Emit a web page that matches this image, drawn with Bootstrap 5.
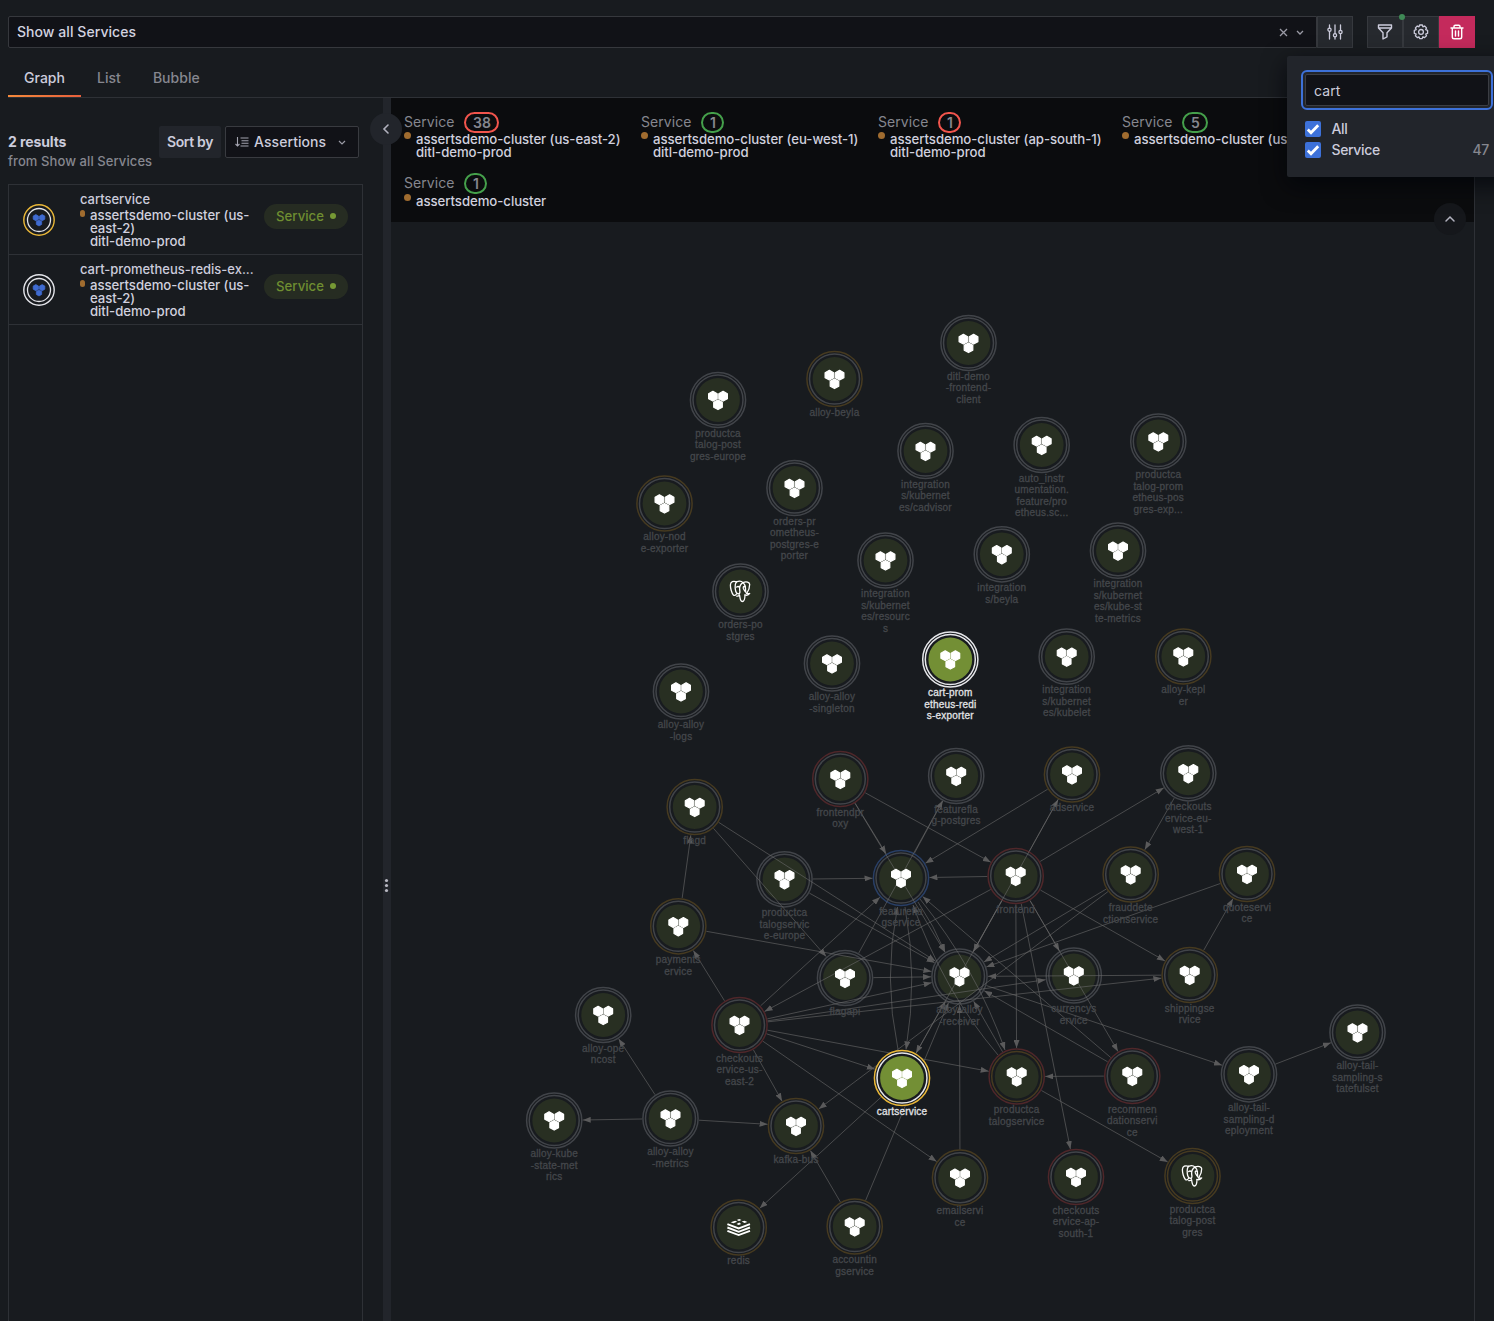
<!DOCTYPE html>
<html lang="en" data-bs-theme="dark">
<head>
<meta charset="utf-8">
<meta name="viewport" content="width=device-width, initial-scale=1">
<title>Entity explorer</title>
<link href="https://cdn.jsdelivr.net/npm/bootstrap@5.3.0/dist/css/bootstrap.min.css" rel="stylesheet">
<style>
:root{--line:#2e3136;--txt:#ccccdc;--muted:#86878f;--canvas:#111217;--page:#181b1f;--raised:#22252b}
body{background:var(--page);color:var(--txt);font:14px/22px Inter,"Liberation Sans",sans-serif;letter-spacing:.06px;height:100vh;overflow:hidden;-webkit-font-smoothing:antialiased}
svg{display:block}
.topbar{padding:16px 19px 0 8px}
.query{height:32px;background:var(--canvas);border:1px solid #36383d;border-radius:2px 0 0 2px;padding:0 12px 0 8px;color:#d3d3e0}
.tool{width:36px;height:32px;background:#26292e;border:1px solid #36393e;border-radius:0;color:var(--txt);padding:0;display:flex;align-items:center;justify-content:center}
.tool:last-child{border-radius:0 2px 2px 0}
.tool.trash{background:#c42a5c;border-color:#c42a5c;color:#fff}
.tool-group{margin-left:14px}
.status-dot{position:absolute;width:6px;height:6px;border-radius:50%;background:#3f8a56;left:32px;top:-2px}
.tabs{height:50px;border-bottom:1px solid var(--line);margin:0 19px 0 8px;padding-top:8px}
.tabs .nav-link{color:var(--muted);padding:11px 16px 0;height:41px;border-radius:0;position:relative;font-weight:500;letter-spacing:.03px}
.tabs .nav-link.active{color:var(--txt)}
.tabs .nav-link.active::after{content:"";position:absolute;left:0;right:0;bottom:0;height:2px;background:linear-gradient(90deg,#f58a3c,#e8603c)}
.work{height:1223px}
.side{width:383px;padding:28px 20px 0 8px}
.side-head{height:58px}
.found{line-height:19px;padding-top:7px;width:151px}
.found strong{font-weight:700;letter-spacing:-.1px;display:block;line-height:18px}
.found div{color:var(--muted);font-size:13px;font-weight:500;line-height:20px;letter-spacing:.09px}
.sortby{width:62px;height:32px;background:var(--raised);border-radius:2px;font-weight:600;line-height:32px;text-align:center;letter-spacing:-.35px}
.sortsel{width:134px;height:32px;background:var(--canvas);border:1px solid #393b40;border-radius:2px;padding:0 11px 0 9px;font-weight:500}
.sort-name{margin-left:5px}
.results{border:1px solid var(--line);border-bottom:0;width:355px;flex:1}
.hit{height:70px;border-bottom:1px solid var(--line);padding:0 14px}
.hit-text{width:176px;margin-left:25px;padding-top:4px;white-space:nowrap;height:69px}
.hit-name{line-height:21px;height:20px;font-weight:500;font-size:13px;letter-spacing:-.02px}
.place{font-size:13.2px;line-height:13px;font-weight:500;padding-left:10px;position:relative;white-space:normal;color:#d0d0de;letter-spacing:-.05px}
.place::before{content:"";position:absolute;left:0;top:1px;width:5px;height:7px;border-radius:3px;background:#a06c2f}
.pill{width:84px;height:25px;border-radius:13px;background:#262c22;color:#6f8e31;font-weight:500;font-size:13.2px;letter-spacing:0;line-height:25px;margin-top:-7px;margin-left:8px;gap:6px}
.pill i{width:6px;height:6px;border-radius:50%;background:#769934}
.split{width:8px;background:var(--raised);position:relative}
.knob{position:absolute;width:32px;height:32px;border-radius:50%;display:flex;align-items:center;justify-content:center;color:#b2b2bf}
.split .knob{left:-13px;top:15px;background:var(--raised);z-index:3}
.grip{position:absolute;left:1px;top:780px}
.stage{width:1084px;border-right:1px solid var(--line);position:relative}
.legend-bar{height:124px;background:#0b0c0e;padding:13px 0 0 13px;display:grid;grid-template-columns:237px 237px 244px 1fr;grid-template-rows:61px 61px;overflow:hidden}
.legend-bar .kind{height:22px;color:var(--muted);line-height:22px}
.legend-bar .place{white-space:nowrap;padding-left:12px;margin-top:0}
.legend-bar .place::before{width:7px;height:7px;border-radius:50%;top:-1px}
.legend-bar>div:last-child .place{top:1px}
.tally{border:2px solid #45a04b;border-radius:12px;height:21px;min-width:23px;padding:0 6.5px;line-height:18px;text-align:center;font-weight:600;margin-left:10px}
.tally.bad{border-color:#f2554d}
.stage .knob{right:8px;top:105px;background:#15171b;z-index:2}
.pop{position:absolute;left:1287px;top:56px;width:240px;height:121px;background:var(--raised);border-radius:2px;box-shadow:0 8px 24px rgba(1,4,9,.75);padding:18px 0 0 18px;z-index:5}
.pop input[type=text]{display:block;margin-bottom:12px;width:184px;height:32px;background:var(--canvas);border:1px solid #3b3d43;border-radius:2px;color:var(--txt);padding:0 8px;outline:2px solid #3d71d9;outline-offset:2px;font-size:14px;letter-spacing:.1px}
.opt{width:184px;height:21px;font-weight:500;letter-spacing:-.35px}
.opt .tick{width:16px;height:16px;border-radius:2px;background:#3d71d9;margin-right:10.5px}
.opt .total{color:var(--muted)}
.lbl{font:10px "Liberation Sans",Arial,sans-serif;letter-spacing:.2px;text-anchor:middle}
</style>
</head>
<body>
<svg width="0" height="0" class="position-absolute">
<defs>
<g id="cubes" stroke-width="1.200" stroke-linejoin="round">
<path d="M-5.100-8.700l4.300 2.400v5L-5.100 1.100l-4.300-2.400v-5z"/><path d="M5.100-8.700l4.300 2.400v5L5.100 1.100.8-1.300v-5z"/><path d="M0-.1l4.300 2.400v4.900L0 9.600l-4.300-2.400V2.300z"/>
</g>
<g id="elephant" fill="none" stroke="#fff" stroke-width="1.300" stroke-linecap="round" stroke-linejoin="round">
<path d="M-4-9.600c-3-1.300-6-.3-6.100 3.200-.1 3 1.300 8 3 9.900 1 1 2 .3 3.200-1.200"/>
<path d="M-4-9.600c-1.400 1.300-1.500 4-1.200 7.200.3 2.700 1 4.800 3.700 4.800"/>
<path d="M-4-9.600c2.500-1 5-.8 6.500.7C6-10.700 9-9 9.200-7.200 9.300-4.500 8-.8 6.200 2"/>
<path d="M2.500-8.900C4-7.500 5-5 5-3.300 5-1 5 1.500 6.200 2c1.200.5 2 .2 3 0-1 1.500-3 2-4.700 1.500"/>
<path d="M-1.500 2.400C-.6 1.800-.5-.6-.9-2.200M-3.800 4.600c1.200.3 2.200 0 2.900-.8C-.5 7-.2 10 1.800 10c2.100 0 2.600-2 2.700-6.500"/>
<path d="M2.500-8.900C0-7.500-1-4.500-.9-2.200M5-4.500C3.500-5.500 2.500-4.800 2.800-3.300 3.200-2 4-1 4.800.2M-3.800-4.500c1-.8 2-.6 2.800.2"/>
</g>
<g id="stack">
<path d="M-11.300 3.300L0 7.600 11.300 3.300M-11.300 0L0 4.300 11.300 0M-11.300-3.300L0 1 11.300-3.300" fill="none" stroke-width="1.900"/>
<path d="M-8-5.300l4.500-1.400 2 .9-3.800 1.500zM-2-7.500l2.500-.9 2.300.9-2.500.9zM3-5.900l2.700-.9 3 1.300-2.900 1.100zM-2.200-3.600l2.800-1.500 1.800 1.700-2.400.9z" stroke="none"/>
</g>
<marker id="tip" viewBox="0 0 8 6" refX="8" refY="3" markerWidth="8" markerHeight="6" markerUnits="userSpaceOnUse" orient="auto"><path d="M0 0L8 3 0 6z" fill="#5a5a5b"/></marker>
</defs>
</svg>

<header class="topbar d-flex">
  <div class="query flex-grow-1 d-flex align-items-center">
    <span class="me-auto fw-medium">Show all Services</span>
    <svg width="10" height="10" viewBox="0 0 10 10" stroke="#9a9aa5" stroke-width="1.300" fill="none"><path d="M2 2l7 7M9 2l-7 7"/></svg>
    <svg class="ms-2" width="8" height="10" viewBox="0 0 8 10" stroke="#9a9aa5" stroke-width="1.300" fill="none"><path d="M1 4l3 3 3-3"/></svg>
  </div>
  <button class="tool" type="button" aria-label="Options"><svg width="16" height="16" viewBox="0 0 16 16" fill="none" stroke="currentColor" stroke-width="1.300" stroke-linecap="round"><path d="M2.500 1v3M2.500 7.500V15M8 1v8.500M8 13v2M13.500 1v5.500M13.500 10v5"/><circle cx="2.500" cy="5.700" r="1.600"/><circle cx="8" cy="11.300" r="1.600"/><circle cx="13.500" cy="8" r="1.600"/></svg></button>
  <div class="tool-group d-flex position-relative">
    <button class="tool" type="button" aria-label="Filter"><svg width="16" height="16" viewBox="0 0 16 16" fill="none" stroke="currentColor" stroke-width="1.400" stroke-linejoin="round"><path d="M1.500 1h13v3L10 8.800v4L6 15V8.800L1.500 4zM1.500 4h13"/></svg></button>
    <button class="tool" type="button" aria-label="Settings"><svg width="16" height="16" viewBox="0 0 16 16" fill="none" stroke="currentColor" stroke-width="1.300" stroke-linejoin="round"><path d="M6.600 1h2.800l.5 1.800 1.700-.8 1.900 1.900-.8 1.700 1.900.8v2.900l-1.900.7.8 1.700-1.900 1.900-1.700-.8-.7 1.800H6.600l-.6-1.800-1.700.8-1.900-1.900.8-1.700L1.300 9.300V6.400l1.900-.8-.8-1.700L4.300 2l1.700.8z"/><circle cx="8" cy="7.900" r="2.400"/></svg></button>
    <button class="tool trash" type="button" aria-label="Clear"><svg width="16" height="16" viewBox="0 0 16 16" fill="none" stroke="currentColor" stroke-width="1.400" stroke-linecap="round" stroke-linejoin="round"><path d="M2 4h12M5 4V2.500Q5 1.200 6.300 1.200h3.400Q11 1.200 11 2.500V4M3.300 4v9q0 1.800 1.800 1.800h5.800q1.800 0 1.800-1.800V4M6.500 7v5M9.500 7v5"/></svg></button>
    <span class="status-dot"></span>
  </div>
</header>

<nav class="nav tabs flex-nowrap">
  <a class="nav-link active" href="#">Graph</a>
  <a class="nav-link" href="#">List</a>
  <a class="nav-link" href="#">Bubble</a>
</nav>

<main class="work d-flex">
  <section class="side d-flex flex-column">
    <div class="side-head d-flex">
      <div class="found text-nowrap"><strong>2 results</strong><div>from Show all Services</div></div>
      <div class="sortby">Sort by</div>
      <div class="sortsel d-flex align-items-center ms-1">
        <svg width="14" height="12" viewBox="0 0 14 12" fill="none" stroke="#a3a3af" stroke-width="1.100"><path d="M2.500 1v9M.5 8l2 2 2-2M5.500 2h8M6.500 4.700h7M6.500 7.300h7M5.500 10h8"/></svg>
        <span class="sort-name me-auto">Assertions</span>
        <svg width="10" height="10" viewBox="0 0 10 10" stroke="#9a9aa5" stroke-width="1.200" fill="none"><path d="M2 4l3 3 3-3"/></svg>
      </div>
    </div>
    <div class="results">
      <div class="hit d-flex align-items-center">
        <svg width="32" height="32" viewBox="-16 -16 32 32"><circle r="15.200" fill="none" stroke="#eab839" stroke-width="1.400"/><circle r="11.500" fill="none" stroke="#e4e5ea" stroke-width="1.300"/><use href="#cubes" transform="scale(.62)" fill="#3f6bd0" stroke="#3f6bd0"/></svg>
        <div class="hit-text"><div class="hit-name">cartservice</div><div class="place">assertsdemo-cluster (us-<br>east-2)<br>ditl-demo-prod</div></div>
        <div class="pill d-flex align-items-center justify-content-center"><span>Service</span><i></i></div>
      </div>
      <div class="hit d-flex align-items-center">
        <svg width="32" height="32" viewBox="-16 -16 32 32"><circle r="15.200" fill="none" stroke="#e4e5ea" stroke-width="1.400"/><circle r="11.500" fill="none" stroke="#e4e5ea" stroke-width="1.300"/><use href="#cubes" transform="scale(.62)" fill="#3f6bd0" stroke="#3f6bd0"/></svg>
        <div class="hit-text"><div class="hit-name">cart-prometheus-redis-ex...</div><div class="place">assertsdemo-cluster (us-<br>east-2)<br>ditl-demo-prod</div></div>
        <div class="pill d-flex align-items-center justify-content-center"><span>Service</span><i></i></div>
      </div>
    </div>
  </section>
  <div class="split">
    <div class="knob"><svg width="10" height="12" viewBox="0 0 10 12" fill="none" stroke="currentColor" stroke-width="1.600" stroke-linecap="round"><path d="M7 2L3 6l4 4"/></svg></div>
    <svg class="grip" width="5" height="16" viewBox="0 0 5 16" fill="#b8b8c2"><circle cx="2.500" cy="2.500" r="1.600"/><circle cx="2.500" cy="7.500" r="1.600"/><circle cx="2.500" cy="12.500" r="1.600"/></svg>
  </div>
  <section class="stage">
    <div class="legend-bar">
      <div><div class="kind d-flex align-items-center">Service<span class="tally bad">38</span></div><div class="place">assertsdemo-cluster (us-east-2)<br>ditl-demo-prod</div></div>
      <div><div class="kind d-flex align-items-center">Service<span class="tally">1</span></div><div class="place">assertsdemo-cluster (eu-west-1)<br>ditl-demo-prod</div></div>
      <div><div class="kind d-flex align-items-center">Service<span class="tally bad">1</span></div><div class="place">assertsdemo-cluster (ap-south-1)<br>ditl-demo-prod</div></div>
      <div><div class="kind d-flex align-items-center">Service<span class="tally">5</span></div><div class="place">assertsdemo-cluster (us-east-2)</div></div>
      <div><div class="kind d-flex align-items-center">Service<span class="tally">1</span></div><div class="place">assertsdemo-cluster</div></div>
    </div>
    <div class="knob"><svg width="12" height="10" viewBox="0 0 12 10" fill="none" stroke="currentColor" stroke-width="1.500" stroke-linecap="round"><path d="M2 7l4-4 4 4"/></svg></div>
    <svg id="graph" width="1083" height="1099" viewBox="391 222 1083 1099"></svg>
  </section>
</main>

<div class="pop">
  <input type="text" value="cart" aria-label="Search">
  <div class="opt d-flex align-items-center"><span class="tick"><svg width="16" height="16" viewBox="0 0 16 16" fill="none" stroke="#fff" stroke-width="2.800"><path d="M2.800 8.600l3.200 3.200 7.200-7.600"/></svg></span>All</div>
  <div class="opt d-flex align-items-center"><span class="tick"><svg width="16" height="16" viewBox="0 0 16 16" fill="none" stroke="#fff" stroke-width="2.800"><path d="M2.800 8.600l3.200 3.200 7.200-7.600"/></svg></span>Service<span class="total ms-auto">47</span></div>
</div>

<script src="https://cdn.jsdelivr.net/npm/bootstrap@5.3.0/dist/js/bootstrap.bundle.min.js"></script>
<script>
// id: [x, y, label lines, outer ring (g grey, y yellow, r red, b blue), icon, inner ring]
const nodes = {
  pge:[718,400,'productca|talog-post|gres-europe','g'], beyla:[834.5,379,'alloy-beyla','y'], fclient:[968.5,343,'ditl-demo|-frontend-|client','g'],
  cadv:[925.5,451,'integration|s/kubernet|es/cadvisor','g'], auto:[1041.7,445,'auto_instr|umentation.|feature/pro|etheus.sc...','g'], ppx:[1158.3,441.5,'productca|talog-prom|etheus-pos|gres-exp...','g'],
  opx:[794.5,488,'orders-pr|ometheus-|postgres-e|porter','g'], nodex:[664.5,503.500,'alloy-nod|e-exporter','y'], res:[885.500,560.500,'integration|s/kubernet|es/resourc|s','g'],
  ibey:[1001.800,554.300,'integration|s/beyla','g'], ksm:[1118,550.700,'integration|s/kubernet|es/kube-st|te-metrics','g'], opg:[740.500,591.500,'orders-po|stgres','g','elephant'],
  single:[832,663.500,'alloy-alloy|-singleton','g'], kubelet:[1066.700,656.700,'integration|s/kubernet|es/kubelet','g'], kepler:[1183.300,656.500,'alloy-kepl|er','y'], logs:[681,691.500,'alloy-alloy|-logs','g'],
  proxy:[840.300,779,'frontendpr|oxy','r'], ffpg:[956.200,776,'featurefla|g-postgres','g'], ad:[1072,774.500,'adservice','y'], coeu:[1188.300,773.300,'checkouts|ervice-eu-|west-1','g'],
  flagd:[694.700,807,'flagd','y'], pcse:[784.500,879.300,'productca|talogservic|e-europe','g'], ff:[901,878,'featurefla|gservice','b'], fe:[1015.700,876,'frontend','r'],
  fraud:[1130.700,874.500,'frauddete|ctionservice','y'], quote:[1247,874,'quoteservi|ce','y'], pay:[678.300,926.300,'payments|ervice','y'], flagapi:[845,978,'flagapi','g'],
  recv:[959.500,976.500,'alloy-alloy|-receiver','g'], cur:[1073.800,975.500,'currencys|ervice','g'], ship:[1189.700,975,'shippingse|rvice','y'], cost:[603.200,1015,'alloy-ope|ncost','g'],
  cous:[739.500,1025,'checkouts|ervice-us-|east-2','r'], pcs:[1016.700,1076.500,'productca|talogservice','r','','y'], rec:[1132.300,1076,'recommen|dationservi|ce','r'],
  dep:[1249,1074.300,'alloy-tail-|sampling-d|eployment','g'], sts:[1357.500,1032.500,'alloy-tail-|sampling-s|tatefulset','g'], kube:[554.200,1120.500,'alloy-kube|-state-met|rics','g'],
  met:[670.500,1118.500,'alloy-alloy|-metrics','g'], kafka:[796,1126,'kafka-bus','y'], email:[960,1177.700,'emailservi|ce','y'], coap:[1076,1177,'checkouts|ervice-ap-|south-1','r'],
  pcpg:[1192.500,1176,'productca|talog-post|gres','y','elephant','y'], redis:[738.700,1227.500,'redis','y','stack'], acc:[854.700,1226.500,'accountin|gservice','y'],
  cartx:[950.300,659.500,'cart-prom|etheus-redi|s-exporter','w'], cart:[902,1078,'cartservice','Y']
};
const links = `pay flagd,flagd recv,flagd flagapi,pcse ff,pcse recv,pay recv,flagapi recv,flagapi ffpg,ff ffpg,proxy ff,proxy recv,proxy fe,fe ff,ad ff,fe ad,ad recv,fe recv,fe coeu,coeu fraud,fraud recv,fraud kafka,quote recv,ship quote,ship recv,cous ship,cous cur,cous recv,cous ff,fe cous,cous pay,cous cart,cous pcs,cous email,cous kafka,fe ship,fe cur,fe rec,fe pcs,fe coap,fe cart,cart recv,pcs recv,rec ff,rec recv,rec pcs,recv dep,dep sts,pcs pcpg,email recv,acc recv,acc kafka,cart redis,met cost,met kube,met kafka`;
const ring = {g:'#414449', y:'#463a20', r:'#4f272a', b:'#293f66', w:'#e6e7ea', Y:'#eab839'};
const lit = n => n[3] === 'w' || n[3] === 'Y';
const disc = n => { const l = lit(n);
  return `<g transform="translate(${n[0]} ${n[1]})"><circle r="27.600" fill="#181b1f" stroke="${ring[n[3]]}" stroke-width="1.500"/><circle r="25" fill="none" stroke="${l ? ring.w : ring[n[5] || 'g']}" stroke-width="1.500"/><circle r="21.900" fill="${l ? '#738f35' : '#282f22'}"/></g>`; };
const face = n => `<use href="#${n[4] || 'cubes'}" fill="#fff" stroke="#fff" transform="translate(${n[0]} ${n[1]})"/><text class="lbl" ${lit(n) ? 'fill="#e2e3e6" stroke="#e2e3e6"' : 'fill="#44474b" stroke="#44474b"'} stroke-width=".3">` +
  n[2].split('|').map((t, i) => `<tspan x="${n[0]}" y="${(n[1] + 36.700 + i * 11.500).toFixed(1)}">${t}</tspan>`).join('') + '</text>';
const all = Object.values(nodes);
let lines = links.split(',').map(p => {
  const [a, b] = p.split(' ').map(k => nodes[k]);
  const dx = b[0] - a[0], dy = b[1] - a[1], d = Math.hypot(dx, dy), u = 28.500 / d;
  return `<path d="M${a[0] + dx * u} ${a[1] + dy * u}L${b[0] - dx * u} ${b[1] - dy * u}" marker-end="url(#tip)"/>`;
}).join('');
// paired services bow apart so that both directions stay readable
lines += '<path d="M898 1049.500Q883 978 897.500 907" marker-end="url(#tip)"/><path d="M905 907Q918 978 906 1049.500" marker-end="url(#tip)"/>'
  + '<path d="M918 902Q934 926 945 952" marker-end="url(#tip)"/><path d="M998 1055Q943 990 913 905" marker-end="url(#tip)"/><path d="M920 899Q977 970 1005 1050" marker-end="url(#tip)"/>';
const dim = all.filter(n => !lit(n)), hot = all.filter(lit);
document.getElementById('graph').innerHTML = dim.map(disc).join('') + `<g fill="none" stroke="#6b6b6b" stroke-opacity=".6" stroke-width="1">${lines}</g>` + dim.map(face).join('') + hot.map(n => disc(n) + face(n)).join('');
</script>
</body>
</html>
